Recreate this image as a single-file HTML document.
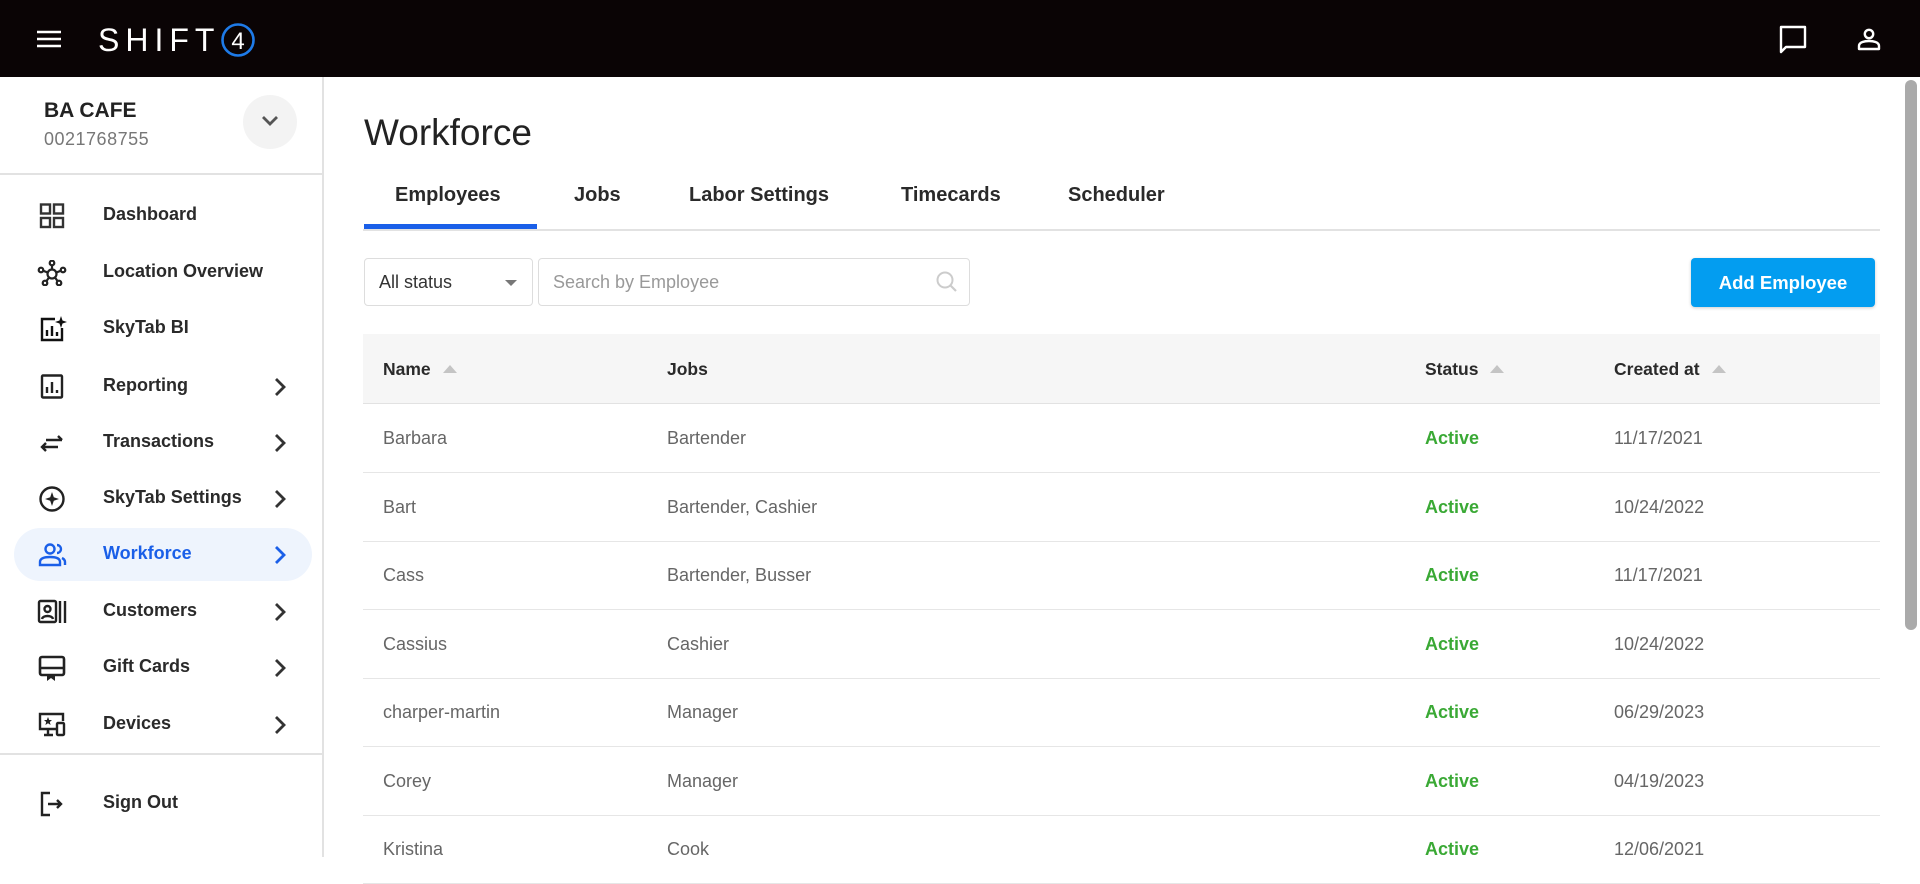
<!DOCTYPE html>
<html><head><meta charset="utf-8"><style>
*{box-sizing:border-box;margin:0;padding:0}
body{width:1920px;height:857px;overflow:hidden;background:#fff;font-family:"Liberation Sans",sans-serif;position:relative;color:#222}
.top{position:absolute;left:0;top:0;width:1920px;height:77px;background:#0a0405}
.side{position:absolute;left:0;top:77px;width:324px;height:780px;border-right:2px solid #e2e2e2}
.abs{position:absolute}
.item{position:absolute;left:0;width:322px;height:52px}
.item .ic{position:absolute;left:37px;top:14px;width:30px;height:26px}
.item .tx{position:absolute;left:103px;top:15px;font-size:18px;font-weight:bold;color:#2a2a2a}
.item .ch{position:absolute;left:273px;top:17px}
.tab{position:absolute;top:184px;font-size:20px;font-weight:bold;color:#2a2a2a}
.row{position:absolute;left:363px;width:1517px;height:69px;border-bottom:1.5px solid #e6e6e6;font-size:18px;color:#666}
.row span{position:absolute;top:24px}
.act{color:#3aa935;font-weight:bold}
.h{position:absolute;top:25px;font-size:17.5px;font-weight:bold;color:#2a2a2a}
.tri{display:inline-block;width:0;height:0;border-left:7px solid transparent;border-right:7px solid transparent;border-bottom:8px solid #c4c4c4;margin-left:12px;vertical-align:2px}
</style></head><body>
<div class="top">
  <svg class="abs" style="left:36px;top:29px" width="26" height="20"><path d="M1 3H25M1 10H25M1 17H25" stroke="#fff" stroke-width="2.6"/></svg>
  <div class="abs" style="left:98px;top:22px;font-size:32px;color:#fff;letter-spacing:6px;font-weight:300">SHIFT</div>
  <svg class="abs" style="left:220px;top:22px" width="36" height="36"><circle cx="18" cy="18" r="15.5" fill="none" stroke="#1e7be8" stroke-width="2.6"/><text x="18" y="27" text-anchor="middle" fill="#fff" font-size="24" font-family="Liberation Sans">4</text></svg>
  <svg class="abs" style="left:1778px;top:24px" width="30" height="30"><path d="M3 3H27V23H8L3 28Z" fill="none" stroke="#fff" stroke-width="2.4" stroke-linejoin="round"/></svg>
  <svg class="abs" style="left:1856px;top:26px" width="26" height="26"><circle cx="13" cy="8" r="4.2" fill="none" stroke="#fff" stroke-width="2.4"/><path d="M3 23V20C3 16 9 15 13 15S23 16 23 20V23Z" fill="none" stroke="#fff" stroke-width="2.4" stroke-linejoin="round"/></svg>
</div>
<div class="side">
  <div class="abs" style="left:44px;top:22px;font-size:21px;font-weight:bold;color:#222">BA CAFE</div>
  <div class="abs" style="left:44px;top:52px;font-size:18px;color:#777;letter-spacing:.5px">0021768755</div>
  <div class="abs" style="left:243px;top:18px;width:54px;height:54px;border-radius:50%;background:#f3f3f3"><svg style="position:absolute;left:17px;top:19px" width="20" height="14"><path d="M3 3L10 10L17 3" fill="none" stroke="#555" stroke-width="2.8"/></svg></div>
  <div class="abs" style="left:0;top:96px;width:322px;height:1.5px;background:#e2e2e2"></div>
  <div class="abs" style="left:0;top:676px;width:322px;height:1.5px;background:#e2e2e2"></div>

  <div class="item" style="top:112px"><svg class="ic" viewBox="0 0 30 26"><g fill="none" stroke="#333" stroke-width="2.4"><rect x="4" y="1.5" width="9" height="9"/><rect x="17" y="1.5" width="9" height="9"/><rect x="4" y="15" width="9" height="9"/><rect x="17" y="15" width="9" height="9"/></g></svg><div class="tx">Dashboard</div></div>
  <div class="item" style="top:169px"><svg class="ic" viewBox="0 0 30 26"><g fill="none" stroke="#222" stroke-width="2.2"><circle cx="15" cy="14" r="4.5"/><circle cx="15" cy="3" r="2.3"/><circle cx="4" cy="10" r="2.3"/><circle cx="26" cy="10" r="2.3"/><circle cx="8" cy="23" r="2.3"/><circle cx="22" cy="23" r="2.3"/><path d="M15 5V9.5M6 10.7L10.7 12.5M24 10.7L19.3 12.5M9.5 21L12 17.5M20.5 21L18 17.5"/></g></svg><div class="tx">Location Overview</div></div>
  <div class="item" style="top:225px"><svg class="ic" viewBox="0 0 30 26"><g fill="none" stroke="#111" stroke-width="2.4"><path d="M18 3H5V24H25V12"/><path d="M10 20V14M15 20V10M20 20V16"/></g><path d="M24 0L25.5 4.5L30 6L25.5 7.5L24 12L22.5 7.5L18 6L22.5 4.5Z" fill="#111"/></svg><div class="tx">SkyTab BI</div></div>
  <div class="item" style="top:283px"><svg class="ic" viewBox="0 0 30 26"><g fill="none" stroke="#222" stroke-width="2.4"><rect x="5" y="1.5" width="20" height="22" rx="1"/><path d="M10 19V13M15 19V8M20 19V16"/></g></svg><div class="tx">Reporting</div><svg class="ch" width="14" height="20"><path d="M3 2L11 10L3 18" fill="none" stroke="#333" stroke-width="2.8"/></svg></div>
  <div class="item" style="top:339px"><svg class="ic" viewBox="0 0 30 26"><g fill="none" stroke="#222" stroke-width="2.4"><path d="M9 10H25M21 6L25 10M5 17H21M9 13L5 17L9 21"/></g></svg><div class="tx">Transactions</div><svg class="ch" width="14" height="20"><path d="M3 2L11 10L3 18" fill="none" stroke="#333" stroke-width="2.8"/></svg></div>
  <div class="item" style="top:395px"><svg class="ic" viewBox="0 0 30 26"><circle cx="15" cy="13" r="11.5" fill="none" stroke="#222" stroke-width="2.4"/><path d="M15 6L16.8 11.2L22 13L16.8 14.8L15 20L13.2 14.8L8 13L13.2 11.2Z" fill="#222"/></svg><div class="tx">SkyTab Settings</div><svg class="ch" width="14" height="20"><path d="M3 2L11 10L3 18" fill="none" stroke="#333" stroke-width="2.8"/></svg></div>
  <div class="abs" style="left:14px;top:451px;width:298px;height:53px;border-radius:27px;background:#eef4fd"></div>
  <div class="item" style="top:451px"><svg class="ic" viewBox="0 0 30 26"><g fill="none" stroke="#1a5fe8" stroke-width="2.4"><circle cx="13" cy="7" r="4.5"/><path d="M3 23V20C3 16 8 15 13 15S23 16 23 20V23Z"/><path d="M20 3A4 4 0 0 1 20 11M25 16C27 17 28 18 28 20V23"/></g></svg><div class="tx" style="color:#1a5fe8">Workforce</div><svg class="ch" width="14" height="20"><path d="M3 2L11 10L3 18" fill="none" stroke="#1a5fe8" stroke-width="2.8"/></svg></div>
  <div class="item" style="top:508px"><svg class="ic" viewBox="0 0 30 26"><g fill="none" stroke="#222" stroke-width="2.4"><rect x="2" y="2" width="17" height="21" rx="1.5"/><circle cx="10.5" cy="10" r="3"/><path d="M5 20C6 16 15 16 16 20M23 2V24M28 2V24"/></g></svg><div class="tx">Customers</div><svg class="ch" width="14" height="20"><path d="M3 2L11 10L3 18" fill="none" stroke="#333" stroke-width="2.8"/></svg></div>
  <div class="item" style="top:564px"><svg class="ic" viewBox="0 0 30 26"><g fill="none" stroke="#222" stroke-width="2.6"><rect x="3" y="2" width="24" height="18" rx="2"/><path d="M3 13H27"/></g><path d="M10 19H18V26L14 23L10 26Z" fill="#222"/></svg><div class="tx">Gift Cards</div><svg class="ch" width="14" height="20"><path d="M3 2L11 10L3 18" fill="none" stroke="#333" stroke-width="2.8"/></svg></div>
  <div class="item" style="top:621px"><svg class="ic" viewBox="0 0 30 26"><g fill="none" stroke="#222" stroke-width="2.4"><path d="M20 17H3V2H26V9M11 17V22M7 23H16"/><rect x="20" y="11" width="7" height="12" rx="1"/></g><path d="M11 5L12.2 8H15L12.8 10L13.6 13L11 11.2L8.4 13L9.2 10L7 8H9.8Z" fill="#222"/></svg><div class="tx">Devices</div><svg class="ch" width="14" height="20"><path d="M3 2L11 10L3 18" fill="none" stroke="#333" stroke-width="2.8"/></svg></div>
  <div class="item" style="top:700px"><svg class="ic" viewBox="0 0 30 26"><g fill="none" stroke="#222" stroke-width="2.4"><path d="M13 2H5V24H13M11 13H24M20 9L24 13L20 17"/></g></svg><div class="tx">Sign Out</div></div>
</div>

<div class="abs" style="left:1905px;top:80px;width:12px;height:550px;border-radius:6px;background:#aaa"></div>

<div class="abs" style="left:364px;top:112px;font-size:37px;color:#222">Workforce</div>
<div class="tab" style="left:395px">Employees</div>
<div class="tab" style="left:574px">Jobs</div>
<div class="tab" style="left:689px">Labor Settings</div>
<div class="tab" style="left:901px">Timecards</div>
<div class="tab" style="left:1068px">Scheduler</div>
<div class="abs" style="left:363px;top:229px;width:1517px;height:1.5px;background:#e2e2e2"></div>
<div class="abs" style="left:364px;top:224px;width:173px;height:5px;background:#1a5fe8"></div>

<div class="abs" style="left:364px;top:258px;width:169px;height:48px;border:1.5px solid #ddd;border-radius:4px"><span style="position:absolute;left:14px;top:13px;font-size:18px;color:#333">All status</span><span style="position:absolute;left:140px;top:21px;border-left:6px solid transparent;border-right:6px solid transparent;border-top:6px solid #777"></span></div>
<div class="abs" style="left:538px;top:258px;width:432px;height:48px;border:1.5px solid #ddd;border-radius:4px"><span style="position:absolute;left:14px;top:13px;font-size:18px;color:#999">Search by Employee</span><svg style="position:absolute;left:396px;top:11px" width="24" height="24"><circle cx="10" cy="10" r="7.5" fill="none" stroke="#ccc" stroke-width="2"/><path d="M15.5 15.5L21 21" stroke="#ccc" stroke-width="2.2"/></svg></div>
<div class="abs" style="left:1691px;top:258px;width:184px;height:49px;border-radius:4px;background:#039df0;box-shadow:0 1px 3px rgba(0,0,0,.2);color:#fff;font-weight:bold;font-size:18.5px;text-align:center;line-height:49px">Add Employee</div>

<div class="abs" style="left:363px;top:334px;width:1517px;height:70px;background:#f6f6f6;border-bottom:1.5px solid #e2e2e2">
  <div class="h" style="left:20px">Name<span class="tri"></span></div>
  <div class="h" style="left:304px">Jobs</div>
  <div class="h" style="left:1062px">Status<span class="tri"></span></div>
  <div class="h" style="left:1251px">Created at<span class="tri"></span></div>
</div>
<div class="row" style="top:404px"><span style="left:20px">Barbara</span><span style="left:304px">Bartender</span><span class="act" style="left:1062px">Active</span><span style="left:1251px">11/17/2021</span></div>
<div class="row" style="top:473px"><span style="left:20px">Bart</span><span style="left:304px">Bartender, Cashier</span><span class="act" style="left:1062px">Active</span><span style="left:1251px">10/24/2022</span></div>
<div class="row" style="top:541px"><span style="left:20px">Cass</span><span style="left:304px">Bartender, Busser</span><span class="act" style="left:1062px">Active</span><span style="left:1251px">11/17/2021</span></div>
<div class="row" style="top:610px"><span style="left:20px">Cassius</span><span style="left:304px">Cashier</span><span class="act" style="left:1062px">Active</span><span style="left:1251px">10/24/2022</span></div>
<div class="row" style="top:678px"><span style="left:20px">charper-martin</span><span style="left:304px">Manager</span><span class="act" style="left:1062px">Active</span><span style="left:1251px">06/29/2023</span></div>
<div class="row" style="top:747px"><span style="left:20px">Corey</span><span style="left:304px">Manager</span><span class="act" style="left:1062px">Active</span><span style="left:1251px">04/19/2023</span></div>
<div class="row" style="top:815px"><span style="left:20px">Kristina</span><span style="left:304px">Cook</span><span class="act" style="left:1062px">Active</span><span style="left:1251px">12/06/2021</span></div>
</body></html>
